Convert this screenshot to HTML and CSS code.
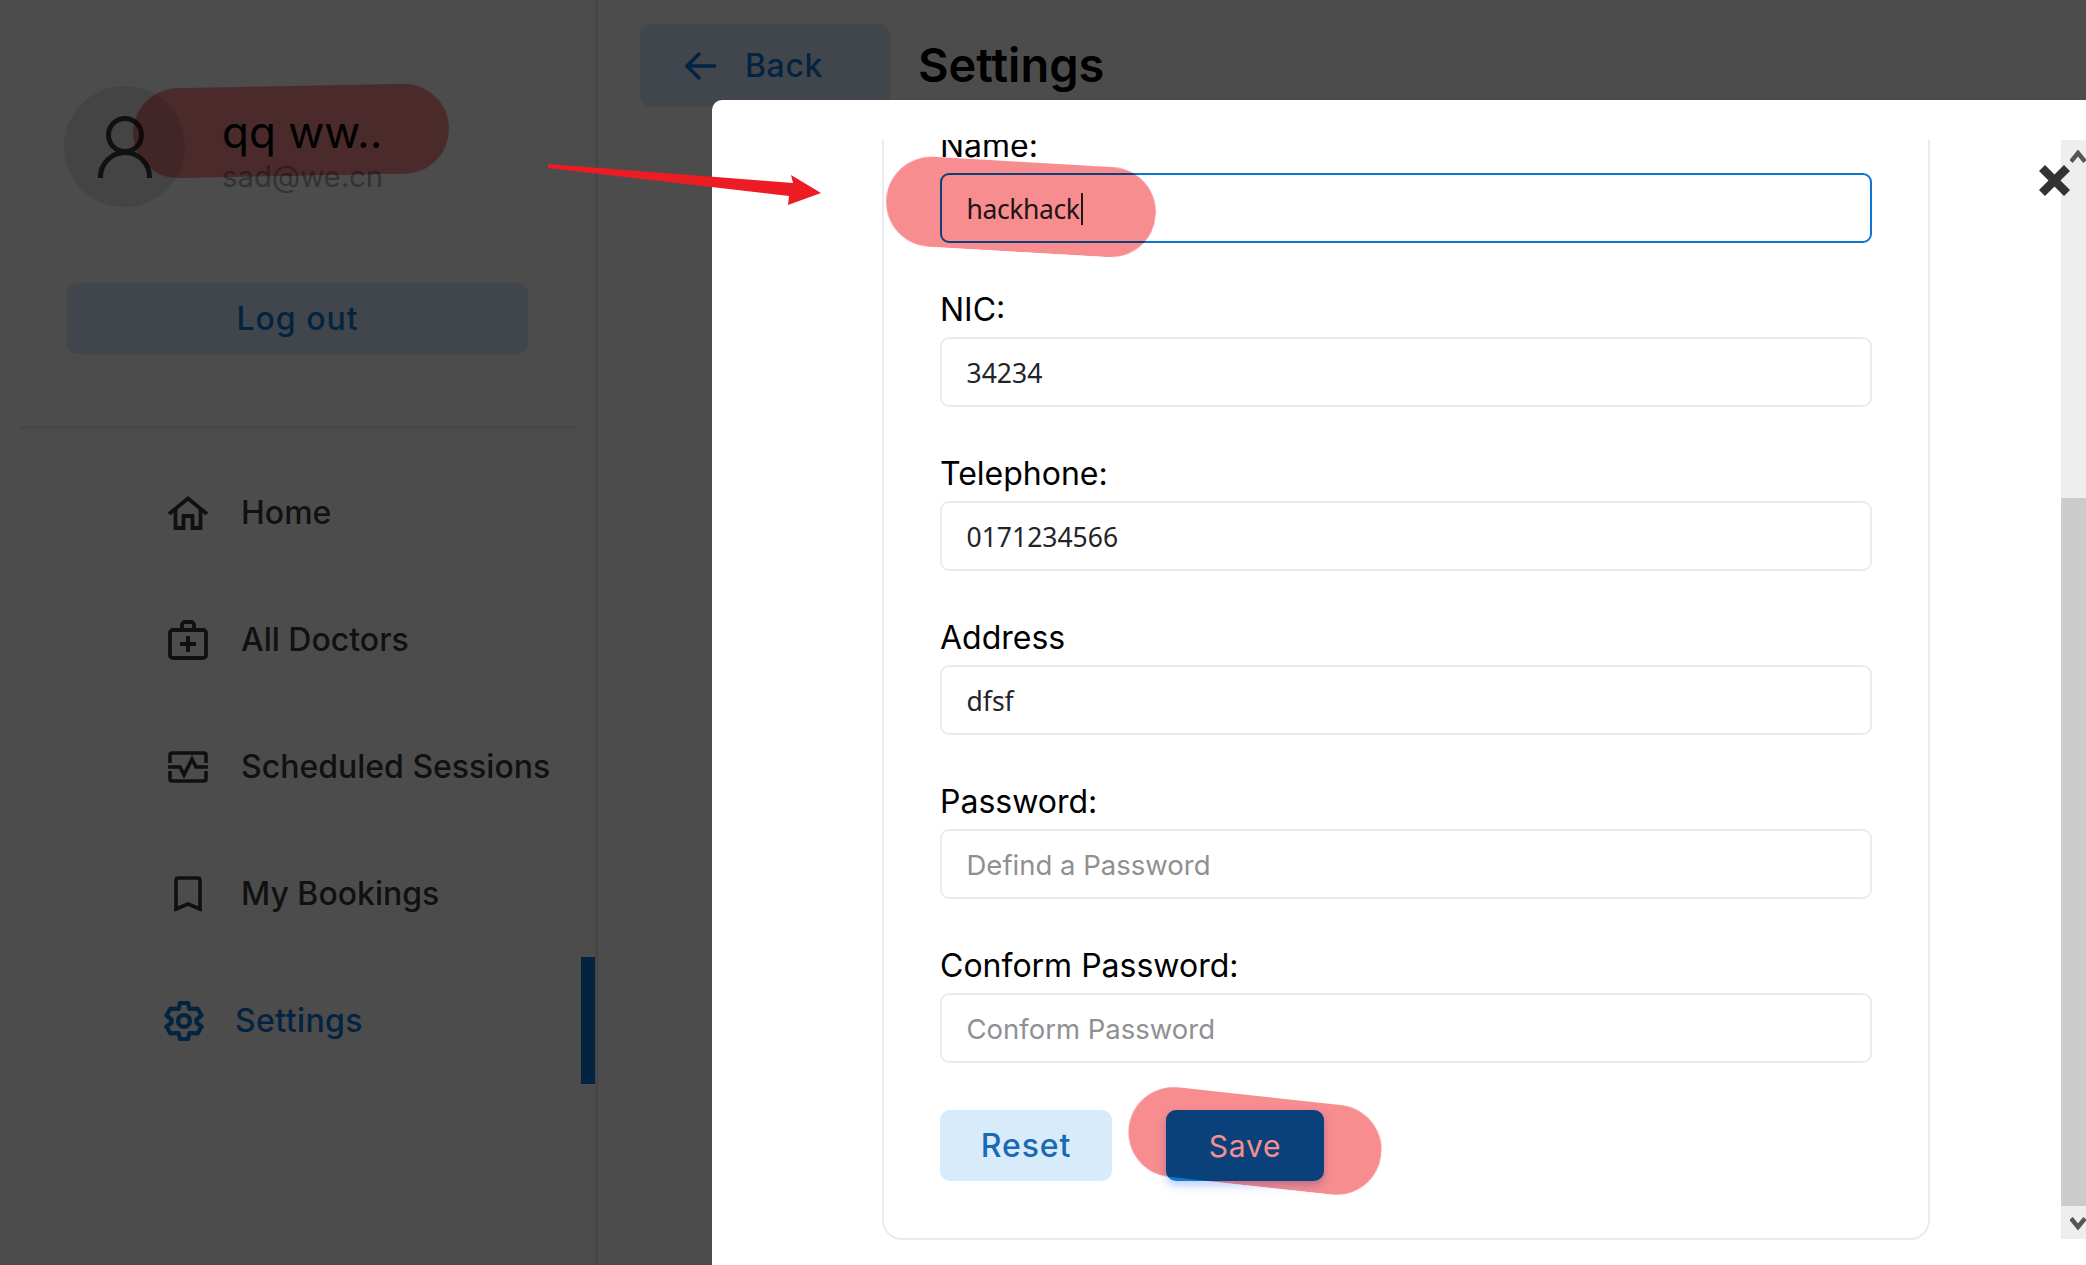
FILE: index.html
```html
<!DOCTYPE html>
<html lang="en">
<head>
<meta charset="utf-8">
<title>Settings</title>
<link rel="stylesheet" href="styles.css">
</head>
<body>
<div class="app">
  <aside class="sidebar">
    <div class="profile">
      <div class="avatar">
        <svg class="avatar-icon" viewBox="0 0 54 62" fill="none" stroke="currentColor" stroke-width="5"><circle cx="27" cy="19" r="16.500"/><path d="M2.500 62V61A24.500 24.500 0 0 1 51.500 61V62"/></svg>
      </div>
      <div class="who">
        <div class="who-name">qq ww..</div>
        <div class="who-mail">sad@we.cn</div>
      </div>
    </div>
    <button class="logout">Log out</button>
    <hr class="rule">
    <nav class="menu">
      <a class="item"><span class="ico"><svg width="40" height="34" viewBox="0 0 40 34" fill="none" stroke="currentColor" stroke-width="3.8"><path d="M1 18L20 2.500 39 18"/><path d="M7.500 13V32H15.500V20H24.500V32H32.500V13"/></svg></span><span>Home</span></a>
      <a class="item"><span class="ico"><svg width="40" height="40" viewBox="0 0 40 40" fill="none" stroke="currentColor" stroke-width="3.800"><rect x="2" y="10" width="36" height="28" rx="3"/><path d="M14 10V5A3 3 0 0 1 17 2H23A3 3 0 0 1 26 5V10"/><path d="M20 16V32M12 24H28" stroke-width="4"/></svg></span><span>All Doctors</span></a>
      <a class="item"><span class="ico"><svg width="40" height="32" viewBox="0 0 40 32" fill="none" stroke="currentColor" stroke-width="3.600"><path d="M2 12V4A2 2 0 0 1 4 2H36A2 2 0 0 1 38 4V12"/><path d="M0 16H12L16 24 24 8 28 16H40"/><path d="M2 20V28A2 2 0 0 0 4 30H36A2 2 0 0 0 38 28V20"/></svg></span><span>Scheduled Sessions</span></a>
      <a class="item"><span class="ico"><svg width="28" height="36" viewBox="0 0 28 36" fill="none" stroke="currentColor" stroke-width="3.600"><path d="M2 33V4A2 2 0 0 1 4 2H24A2 2 0 0 1 26 4V33L14 28Z"/></svg></span><span>My Bookings</span></a>
      <a class="item item-active"><span class="ico ico-active"><svg width="40" height="40" viewBox="-20 -20 40 40" fill="none" stroke="currentColor" stroke-width="4.200" stroke-linejoin="round"><path d="M-5.500 -12L-4 -18 4 -18 5.500 -12 13.590 -12.460 17.590 -5.540 12.500 -1.500 12.500 1.500 17.590 5.540 13.590 12.460 5.500 12 4 18 -4 18 -5.500 12 -13.590 12.460 -17.590 5.540 -12.500 1.500 -12.500 -1.500 -17.590 -5.540 -13.590 -12.460Z"/><circle r="6"/></svg></span><span>Settings</span></a>
    </nav>
  </aside>
  <main class="main">
    <button class="back"><svg width="32" height="30" viewBox="0 0 32 30" fill="none" stroke="currentColor" stroke-width="3.600"><path d="M32 15H3M16 2L3 15 16 28"/></svg><span>Back</span></button>
    <h1 class="title">Settings</h1>
  </main>
</div>

<div class="overlay"></div>

<section class="modal">
  <div class="scroll-area">
    <form class="card">
      <div class="row">
        <label class="label">Name:</label>
        <div class="input input-focus"><span class="typed">hackhack</span><span class="caret"></span></div>
      </div>
      <div class="row">
        <label class="label">NIC:</label>
        <input class="input" value="34234">
      </div>
      <div class="row">
        <label class="label">Telephone:</label>
        <input class="input" value="0171234566">
      </div>
      <div class="row">
        <label class="label">Address</label>
        <input class="input" value="dfsf">
      </div>
      <div class="row">
        <label class="label">Password:</label>
        <input class="input" placeholder="Defind a Password">
      </div>
      <div class="row">
        <label class="label">Conform Password:</label>
        <input class="input" placeholder="Conform Password">
      </div>
      <div class="actions">
        <button type="button" class="btn btn-soft">Reset</button>
        <button type="button" class="btn btn-primary">Save</button>
      </div>
    </form>
  </div>
  <div class="scrollbar">
    <div class="track track-top"><svg width="16" height="14" viewBox="0 0 16 14" fill="none" stroke="currentColor" stroke-width="4.500"><path d="M1 12.500L8 4 15 12.500"/></svg></div>
    <div class="thumb"></div>
    <div class="track track-bottom"><svg width="16" height="14" viewBox="0 0 16 14" fill="none" stroke="currentColor" stroke-width="4.500"><path d="M1 1.500L8 10 15 1.500"/></svg></div>
  </div>
  <svg class="close" width="31" height="31" viewBox="0 0 31 31" fill="none" stroke="#333" stroke-width="8.500"><path d="M3 3L28 28M28 3L3 28"/></svg>
</section>

<div class="mark mark-name"></div>
<div class="mark mark-field"></div>
<div class="mark mark-save"></div>
<svg class="arrow" width="300" height="60" viewBox="540 155 300 60"><polygon fill="#ed1c24" points="548,164 793,183 791,175 821,193 788,205 789,196 548,168"/></svg>
</body>
</html>
```

FILE: styles.css
```css
* { box-sizing: border-box; }
html, body { margin: 0; height: 100%; overflow: hidden; }
body { font-family: Inter, "Liberation Sans", sans-serif; color: #000; background: #fff; }

.app { display: flex; height: 1265px; }

/* Sidebar */
.sidebar { width: 598px; flex: none; border-right: 3px solid #ebebeb; }
.profile { display: flex; padding: 86px 0 0 64px; height: 283px; }
.avatar { width: 121px; height: 121px; border-radius: 50%; background: #e3e3e3; display: flex; align-items: center; justify-content: center; color: #3a3a3a; }
.avatar-icon { width: 54px; height: 62px; }
.who { margin-left: 37px; }
.who-name { font-size: 44px; font-weight: 400; line-height: 48px; margin-top: 22px; }
.who-mail { font-size: 29.300px; line-height: 36px; color: #a3aab5; margin-top: 3px; }
.logout { display: block; width: 461px; height: 71px; margin-left: 67px; border: 0; border-radius: 10px; background: #d8ebfb; color: #0a76d8; font: 500 32px Inter, sans-serif; letter-spacing: 1px; }
.rule { margin: 72px 0 0 21px; width: 554px; height: 3px; border: 0; background: #ebebeb; }
.menu { margin-top: 20px; display: flex; flex-direction: column; }
.item { display: flex; align-items: center; height: 127px; padding-left: 168px; font-size: 32px; font-weight: 500; color: #3b3b3b; }
.ico { width: 40px; margin-right: 33px; display: flex; justify-content: center; color: #383838; }
.item-active { color: #0a76d8; border-right: 14px solid #0a76d8; margin-right: 0; padding-left: 164px; letter-spacing: .4px; }
.ico-active { color: #0a76d8; margin-right: 31px; }

/* Main */
.main { flex: 1; display: flex; align-items: flex-start; padding: 24px 0 0 42px; }
.back { width: 250px; height: 83px; display: flex; align-items: center; gap: 29px; padding: 0 0 0 44px; border: 0; border-radius: 10px; background: #d8ebfb; color: #0a76d8; font: 500 32px Inter, sans-serif; letter-spacing: .6px; }
.title { margin: 14px 0 0 28px; font-size: 47px; line-height: 54px; font-weight: 600; }

/* Overlay and modal */
.overlay { position: fixed; inset: 0; background: rgba(0, 0, 0, .7); }
.modal { position: absolute; left: 712px; top: 100px; width: 1383px; height: 1165px; padding-top: 40px; display: flex; background: #fff; border-radius: 10px 0 0 0; }
.scroll-area { flex: 1; height: 1100px; overflow: hidden; padding: 0 131px 0 170px; }
.card { margin-top: -60px; height: 1160px; padding: 43px 56px 0; border: 2px solid #ebebeb; border-radius: 20px; }
.row { margin-top: 46px; }
.row:first-child { margin-top: 0; }
.label { display: block; height: 40px; line-height: 42px; margin-bottom: 8px; font-size: 32px; }
.input { display: flex; align-items: center; width: 100%; height: 70px; padding: 2px 25px 0 24.500px; border: 2px solid #e8ecf1; border-radius: 9px; font: 26.5px "Noto Sans", sans-serif; color: #212529; background: #fff; outline: 0; }
.input::placeholder { font: 27.5px Inter, sans-serif; color: #8e9093; opacity: 1; }
.input-focus { border-color: #0a76d8; }
.typed { letter-spacing: -.4px; }
.caret { display: inline-block; width: 2px; height: 32px; background: #212529; margin-left: 1px; }
.actions { display: flex; gap: 54px; margin-top: 47px; }
.btn { height: 71px; border: 0; border-radius: 10px; font: 32px Inter, sans-serif; }
.btn-soft { width: 172px; background: #d8ebfb; color: #1969b3; font-weight: 500; letter-spacing: .9px; }
.btn-primary { width: 158px; background: #0a76d8; color: #fff; font-size: 30px; letter-spacing: .8px; box-shadow: 0 4px 10px rgba(57, 108, 240, .35); }

.scrollbar { width: 34px; height: 1099px; flex: none; display: flex; flex-direction: column; background: #eee; color: #555; }
.track { display: flex; justify-content: center; }
.track-top { height: 358px; padding-top: 9px; }
.thumb { height: 708px; background: #ccc; }
.track-bottom { height: 33px; padding-top: 11px; }
.close { position: absolute; left: 1327px; top: 65px; }

/* Hand-drawn annotation marks */
.mark { position: absolute; height: 90px; border-radius: 45px; background: #f88d90; mix-blend-mode: multiply; }
.mark-name { left: 133px; top: 86px; width: 316px; transform: rotate(-1.1deg); }
.mark-field { left: 886px; top: 162px; width: 270px; transform: rotate(3.3deg); }
.mark-save { left: 1128px; top: 1096px; width: 254px; transform: rotate(6.2deg); }
.arrow { position: absolute; left: 540px; top: 155px; }
```
